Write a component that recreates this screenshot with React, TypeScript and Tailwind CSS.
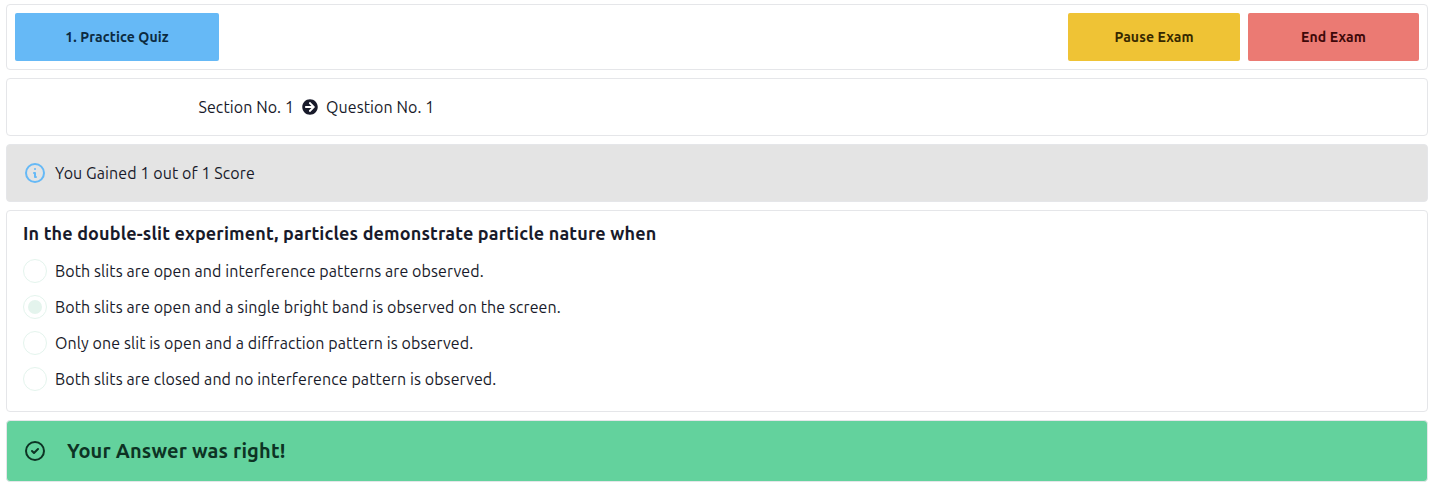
import { FaArrowCircleRight } from "react-icons/fa";

const options = [
  "Both slits are open and interference patterns are observed.",
  "Both slits are open and a single bright band is observed on the screen.",
  "Only one slit is open and a diffraction pattern is observed.",
  "Both slits are closed and no interference pattern is observed.",
];
const selected = 1;
const panel = "rounded border border-[#e5e6e9]";

export default function App() {
  return (
    <main className="flex h-[487px] flex-col gap-2 bg-white pt-1 pr-[7px] pl-1.5 font-['Ubuntu','Noto_Sans',sans-serif] text-base tracking-[0.09px] text-[#181a2a]">
      <header className={`${panel} flex h-[66px] shrink-0 justify-between p-2`}>
        <button className="h-12 w-[204px] rounded-xs bg-[#66b9f6] text-sm font-bold tracking-[0.12px] text-[#0c2a40]">
          1. Practice Quiz
        </button>
        <div className="flex gap-2">
          <button className="h-12 w-[172px] rounded-xs bg-[#efc335] text-sm font-bold tracking-[0.12px] text-[#362800]">
            Pause Exam
          </button>
          <button className="h-12 w-[171px] rounded-xs bg-[#eb7a73] text-sm font-bold tracking-[0.12px] text-[#3d0808]">
            End Exam
          </button>
        </div>
      </header>

      <section className={`${panel} flex h-[58px] shrink-0 items-center gap-2 pl-[191px]`}>
        <span className="w-24 whitespace-nowrap text-right">Section No. 1</span>
        <FaArrowCircleRight className="size-4" />
        <span className="whitespace-nowrap">Question No. 1</span>
      </section>

      <section className={`${panel} flex h-[58px] shrink-0 items-center gap-2 bg-[#e4e4e4] pl-4`}>
        <svg className="size-6 text-[#66b9f6]" viewBox="0 0 24 24" fill="none" stroke="currentColor" strokeWidth="2" strokeLinecap="round" strokeLinejoin="round">
          <path d="M13 16h-1v-4h-1m1-4h.01M21 12a9 9 0 11-18 0 9 9 0 0118 0z" />
        </svg>
        <span>You Gained 1 out of 1 Score</span>
      </section>

      <section className={`${panel} h-[202px] shrink-0 px-4 pt-2`}>
        <h1 className="h-7 text-lg leading-7 font-bold tracking-[0.145px] whitespace-nowrap">
          In the double-slit experiment, particles demonstrate particle nature when
        </h1>
        <ul className="mt-3 flex flex-col gap-3">
          {options.map((option, index) => (
            <li key={option} className="flex h-6 items-center gap-2 whitespace-nowrap">
              <span className="flex size-6 items-center justify-center rounded-full border border-[#e4f4ed]">
                {index === selected && <span className="size-3.5 rounded-full bg-[#e4f4ed]" />}
              </span>
              <span>{option}</span>
            </li>
          ))}
        </ul>
      </section>

      <section className={`${panel} flex h-[62px] shrink-0 items-center gap-5 bg-[#63d29d] pl-4 text-[#0d3324]`}>
        <svg className="size-6" viewBox="0 0 24 24" fill="none" stroke="currentColor" strokeWidth="2" strokeLinecap="round" strokeLinejoin="round">
          <path d="M9 12l2 2 4-4m6 2a9 9 0 11-18 0 9 9 0 0118 0z" />
        </svg>
        <strong className="text-xl font-bold tracking-[0.15px]">Your Answer was right!</strong>
      </section>
    </main>
  );
}
